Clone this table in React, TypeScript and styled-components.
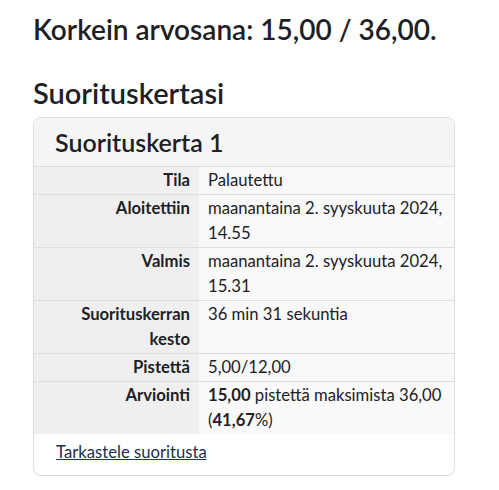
import React from "react";
import styled, { createGlobalStyle } from "styled-components";

const Global = createGlobalStyle`
  html, body { margin: 0; padding: 0; background: #fff; }
  body { font-family: Lato, "Noto Sans", sans-serif; color: #1d2125; }
`;

const Page = styled.div`
  padding: 13px 44px 0 33px;
  display: flex;
  flex-direction: column;
`;

const Title = styled.h2<{ $size: number; $mb: number }>`
  margin: 0 0 ${(p) => p.$mb}px 0;
  font-size: ${(p) => p.$size}px;
  line-height: 1.2;
  font-weight: 600;
  white-space: nowrap;
`;

const Card = styled.section`
  width: 422px;
  box-sizing: border-box;
  border: 1px solid #dcdcdc;
  border-radius: 8px;
  overflow: hidden;
  background: #fff;
`;

const CardHeader = styled.header`
  background: #f5f5f5;
  padding: 0 21px;
  height: 48px;
  display: flex;
  align-items: center;
`;

const CardTitle = styled.h3`
  margin: 0;
  font-size: 25px;
  font-weight: 600;
`;

const Table = styled.table`
  width: 100%;
  border-collapse: collapse;
  font-size: 16.67px;
  line-height: 25px;
`;

const Row = styled.tr`
  border-top: 1px solid #dcdde6;
`;

const Label = styled.th`
  width: 165px;
  box-sizing: border-box;
  background: #efefef;
  text-align: right;
  vertical-align: top;
  font-weight: 700;
  padding: 1px 9px 1px 8px;
`;

const Value = styled.td`
  background: #f9f9f9;
  text-align: left;
  vertical-align: top;
  padding: 1px 9px 1px 9px;
`;

const Footer = styled.div`
  padding: 6px 22px 10px;
  font-size: 16.67px;
  line-height: 25px;
`;

const Link = styled.a`
  color: #1d2f4d;
  text-decoration: underline;
  text-decoration-color: #0f3d73;
`;

const rows: [string, React.ReactNode][] = [
  ["Tila", "Palautettu"],
  ["Aloitettiin", <>maanantaina 2. syyskuuta 2024,<br />14.55</>],
  ["Valmis", <>maanantaina 2. syyskuuta 2024,<br />15.31</>],
  ["Suorituskerran kesto", "36 min 31 sekuntia"],
  ["Pistettä", "5,00/12,00"],
  [
    "Arviointi",
    <>
      <b>15,00</b> pistettä maksimista 36,00 (<b>41,67</b>%)
    </>,
  ],
];

export default function App() {
  return (
    <>
      <Global />
      <Page>
        <Title $size={28} $mb={29}>Korkein arvosana: 15,00 / 36,00.</Title>
        <Title $size={29} $mb={7}>Suorituskertasi</Title>
        <Card>
          <CardHeader>
            <CardTitle>Suorituskerta 1</CardTitle>
          </CardHeader>
          <Table>
            <tbody>
              {rows.map(([l, v]) => (
                <Row key={l}>
                  <Label>{l}</Label>
                  <Value>{v}</Value>
                </Row>
              ))}
            </tbody>
          </Table>
          <Footer>
            <Link href="#">Tarkastele suoritusta</Link>
          </Footer>
        </Card>
      </Page>
    </>
  );
}
